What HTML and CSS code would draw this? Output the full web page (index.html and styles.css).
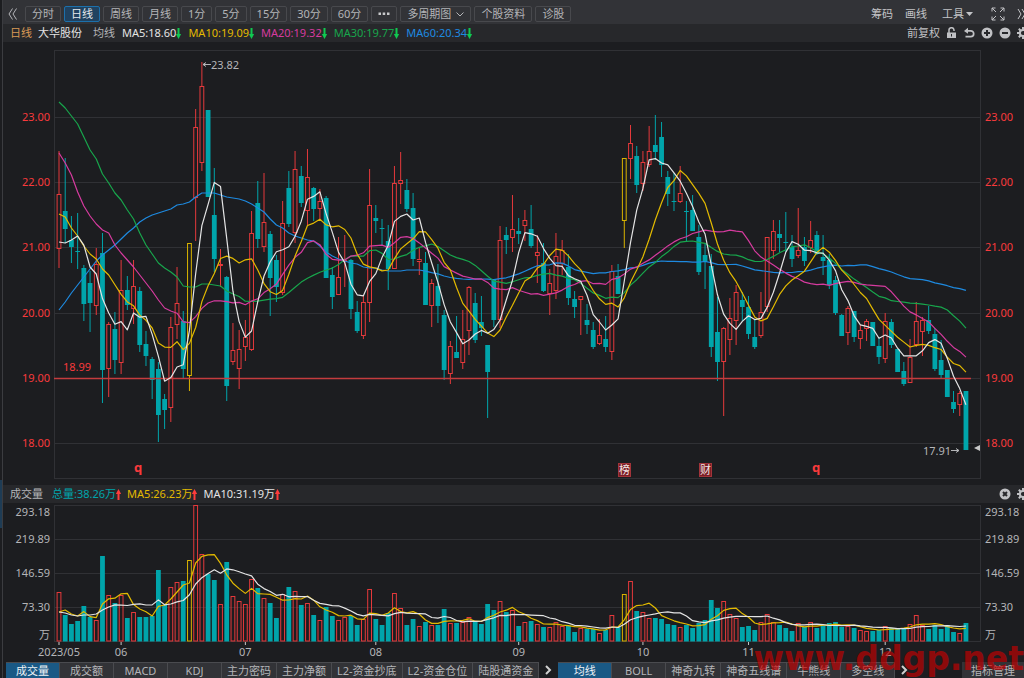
FILE: index.html
```html
<!DOCTYPE html>
<html lang="zh-CN">
<head>
<meta charset="utf-8">
<meta name="viewport" content="width=device-width, initial-scale=1">
<title>大华股份 日线</title>
<link rel="stylesheet" href="styles.css">
</head>
<body>
<div class="app">
  <aside class="edge"><div class="edge-thumb"></div></aside>
  <main class="panel">
    <nav class="toolbar" aria-label="周期">
      <button class="chev" aria-label="收起">
        <svg width="10" height="12" viewBox="0 0 10 12"><path d="M4.500.5 1 6l3.500 5.500M8.500.5 5 6l3.500 5.500"/></svg>
      </button>
      <div class="periods">
        <button class="period">分时</button>
        <button class="period active">日线</button>
        <button class="period">周线</button>
        <button class="period">月线</button>
        <button class="period">1分</button>
        <button class="period">5分</button>
        <button class="period">15分</button>
        <button class="period">30分</button>
        <button class="period">60分</button>
        <button class="period" aria-label="更多"><svg class="dots" width="12" height="4" viewBox="0 0 12 4"><path d="M.5.500h2.500v2.500H.5zM4.700.500h2.500v2.500H4.700zM9 .500h2.500v2.500H9z"/></svg></button>
        <label class="multi">
          <select class="period multi-select" aria-label="多周期图"><option>多周期图</option></select>
          <svg class="caret" width="8" height="5" viewBox="0 0 8 5"><path d="M.5.5 4 4 7.500.5"/></svg>
        </label>
        <button class="period">个股资料</button>
        <button class="period">诊股</button>
      </div>
      <div class="tools">
        <button class="tool">筹码</button>
        <button class="tool">画线</button>
        <button class="tool menu">工具<svg width="7" height="4" viewBox="0 0 7 4"><path class="solid" d="M0 0h7L3.500 4z"/></svg></button>
        <button class="tool" aria-label="全屏"><svg class="expand" width="14" height="14" viewBox="0 0 14 14"><path d="M1 4.500V1h3.500M1 1l4 4M9.500 1H13v3.500M13 1 9 5M1 9.500V13h3.500M1 13l4-4M13 9.500V13H9.500M13 13 9 9"/></svg></button>
        <button class="tool clip" aria-label="展开"><svg width="10" height="12" viewBox="0 0 10 12"><path d="M1 1l3 5-3 5M5 1l3 5-3 5"/></svg></button>
      </div>
    </nav>

    <header class="info">
      <span class="orange">日线</span><strong class="name">大华股份</strong><span class="lbl">均线</span>
      <span class="ma c5">MA5:18.60<svg class="dn" width="5" height="11" viewBox="0 0 5 11"><use href="#down"/></svg></span>
      <span class="ma c10">MA10:19.09<svg class="dn" width="5" height="11" viewBox="0 0 5 11"><use href="#down"/></svg></span>
      <span class="ma c20">MA20:19.32<svg class="dn" width="5" height="11" viewBox="0 0 5 11"><use href="#down"/></svg></span>
      <span class="ma c30">MA30:19.77<svg class="dn" width="5" height="11" viewBox="0 0 5 11"><use href="#down"/></svg></span>
      <span class="ma c60">MA60:20.34<svg class="dn" width="5" height="11" viewBox="0 0 5 11"><use href="#down"/></svg></span>
      <div class="info-tools">
        <button class="adjust">前复权</button>
        <button class="ico" aria-label="锁定"><svg width="11" height="12" viewBox="0 0 11 12"><path d="M3 6V3.500a2.500 2.500 0 0 1 5-.5v1" stroke-width="1.500"/><path class="solid" fill-rule="evenodd" d="M1 5.500h9V11H1zM5 7v2.500h1V7z"/></svg></button>
        <button class="ico" aria-label="撤销"><svg width="12" height="12" viewBox="0 0 12 12"><path class="solid" d="M1 4 5 .8v6z"/><path d="M4 3.800h3.800a2.900 2.900 0 0 1 0 5.800H2.500" stroke-width="1.700"/></svg></button>
        <button class="ico" aria-label="放大"><svg width="12" height="12" viewBox="0 0 12 12"><circle class="solid" cx="6" cy="6" r="5.500"/><path class="cut" d="M6 3v6M3 6h6"/></svg></button>
        <button class="ico" aria-label="缩小"><svg width="12" height="12" viewBox="0 0 12 12"><circle class="solid" cx="6" cy="6" r="5.500"/><path class="cut" d="M3 6h6"/></svg></button>
        <button class="ico clip" aria-label="设置"><svg width="12" height="12" viewBox="0 0 12 12"><use href="#gear"/></svg></button>
      </div>
    </header>

    <svg id="price" class="chart" viewBox="3 42 1021 443" role="img" aria-label="K线图">
      <defs>
        <path id="down" class="arrow" d="M1.500 0h2v6H5.200L2.500 11-.2 6h1.700z"/>
        <path id="up" class="arrow" d="M1.500 11h2V5H5.200L2.500 0-.2 5h1.700z"/>
        <g id="gear"><circle cx="6" cy="6" r="3.100" stroke-width="2"/><path stroke-width="2" d="M6 0v2.500M6 9.500V12M0 6h2.500M9.500 6H12M1.800 1.800l1.700 1.700M8.500 8.500l1.700 1.700M10.200 1.800 8.500 3.500M3.500 8.500l-1.700 1.700"/></g>
      </defs>
    </svg>

    <header class="info vol-info">
      <span class="lbl">成交量</span>
      <span class="ma teal">总量:38.26万<svg class="up" width="5" height="11" viewBox="0 0 5 11"><use href="#up"/></svg></span>
      <span class="ma c10">MA5:26.23万<svg class="up" width="5" height="11" viewBox="0 0 5 11"><use href="#up"/></svg></span>
      <span class="ma c5">MA10:31.19万<svg class="up" width="5" height="11" viewBox="0 0 5 11"><use href="#up"/></svg></span>
      <div class="info-tools">
        <button class="ico" aria-label="关闭"><svg width="12" height="12" viewBox="0 0 12 12"><circle class="solid" cx="6" cy="6" r="5.500"/><path class="cut" d="M4 4l4 4M8 4 4 8"/></svg></button>
        <button class="ico clip" aria-label="设置"><svg width="12" height="12" viewBox="0 0 12 12"><use href="#gear"/></svg></button>
      </div>
    </header>

    <svg id="volume" class="chart" viewBox="3 503 1021 159" role="img" aria-label="成交量图"></svg>

    <footer class="tabs">
      <div class="group">
        <button class="tab on">成交量</button><button class="tab">成交额</button><button class="tab">MACD</button><button class="tab">KDJ</button><button class="tab">主力密码</button><button class="tab">主力净额</button><button class="tab">L2-资金抄底</button><button class="tab">L2-资金仓位</button><button class="tab">陆股通资金</button>
      </div>
      <button class="next" aria-label="更多指标"><svg width="7" height="10" viewBox="0 0 7 10"><path d="M1 1l4 4-4 4"/></svg></button>
      <div class="group">
        <button class="tab on">均线</button><button class="tab">BOLL</button><button class="tab">神奇九转</button><button class="tab">神奇五线谱</button><button class="tab">牛熊线</button><button class="tab">多空线</button>
      </div>
      <button class="next" aria-label="更多均线"><svg width="7" height="10" viewBox="0 0 7 10"><path d="M1 1l4 4-4 4"/></svg></button>
      <button class="tab manage">指标管理</button>
    </footer>
  </main>
  <div class="watermark">www.ddgp.net</div>
</div>
<script src="chart.js"></script>
</body>
</html>
```
FILE: styles.css
```css
* { box-sizing: border-box; }
body {
  margin: 0;
  background: #1c1d20;
  color: #b4b5b8;
  font-family: "Noto Sans", "Noto Sans CJK SC", sans-serif;
  font-size: 11px;
  line-height: 16px;
  overflow: hidden;
}
button, select {
  margin: 0;
  padding: 0;
  border: 0;
  background: none;
  color: inherit;
  font: inherit;
  white-space: nowrap;
}
svg { flex: none; fill: none; stroke: currentColor; }
.solid { fill: currentColor; stroke: none; }
.app { display: flex; position: relative; min-height: 100vh; overflow: hidden; }
.edge { flex: none; width: 3px; border-right: 1px solid #3b3c40; background: #1c1d20; padding-top: 480px; }
.edge-thumb { height: 48px; background: #1e3c55; }
.panel { flex: 1; min-width: 0; display: flex; flex-direction: column; }

.toolbar { display: flex; align-items: center; height: 24px; padding: 4px 0 0 5px; background: #323337; }
.chev { width: 17px; height: 16px; display: flex; align-items: center; }
.periods { display: flex; gap: 3px; }
.period {
  display: flex;
  align-items: center;
  height: 16px;
  padding: 0 6px;
  border: 1px solid #48494d;
  border-radius: 2px;
  line-height: 14px;
}
.period.active { border-color: #1c70ab; background: #204260; color: #e6e9ec; }
.dots { fill: #c8c9cb; stroke: none; }
.multi { position: relative; display: flex; }
.multi-select { appearance: none; width: 71px; }
.caret { position: absolute; right: 7px; top: 6px; }
.tools { margin-left: auto; display: flex; align-items: center; }
.tool { display: flex; align-items: center; margin-right: 12px; color: #c2c3c6; }
.tool.menu { gap: 2px; margin: 0 18px 0 3px; }
.expand { stroke-width: 1; }
.clip { width: 7px; overflow: hidden; margin-right: 0; }

.info { display: flex; align-items: center; height: 18px; padding-left: 7px; background: #27282b; }
.orange { color: #d99a56; margin-right: 6px; }
.name { color: #e3e3e3; font-weight: 400; margin-right: 11px; }
.lbl { margin-right: 7px; }
.ma { display: flex; align-items: center; margin-right: 7px; }
.c5 { color: #e4e4e4; }
.c10 { color: #e3ba00; }
.c20 { color: #d63b9f; }
.c30 { color: #18a64c; }
.c60 { color: #1e8ae0; }
.teal { color: #00a5ab; }
.arrow { fill: currentColor; stroke: none; }
.dn { color: #10c850; }
.up { color: #ff3b3b; }
.vol-info .lbl { margin-right: 9px; }
.vol-info .ma { margin-right: 6px; }
.info-tools { margin-left: auto; display: flex; align-items: center; gap: 6px; color: #c0c1c4; }
.ico { display: flex; }
.cut { stroke: #27282b; stroke-width: 2; }

.chart { display: block; width: 100%; height: auto; font-size: 11px; }
.chart text { stroke: none; fill: #b4b5b8; }
.chart .price-label { fill: #f83a3c; }
.grid, .frame { stroke: #303135; }
.tick { stroke: #c8c8c8; }
.level { stroke: #c43c3e; stroke-width: 1.5; }
.wick, .line { stroke-width: 1; }
.line { stroke-linejoin: round; stroke-width: 1.2; }
.rise { stroke: #e5393b; }
.fall { stroke: #00a5ab; }
.fall.body { fill: #00a5ab; stroke: none; }
.gold { stroke: #d9b300; }
.chart .event { fill: #f83a3c; font-size: 13px; font-weight: 700; text-anchor: middle; }
.badge { fill: #7c1d24; stroke: #a2343a; }
.chart .badge-text { fill: #f2e6e6; text-anchor: middle; }
.end { text-anchor: end; }
.middle { text-anchor: middle; }
.marker { fill: #c8c8c8; stroke: none; }

.tabs { display: flex; align-items: stretch; height: 16px; padding-left: 3px; }
.group { display: flex; border-top: 1px solid #4a4b4f; }
.tab { min-width: 54px; padding: 0 5px; border-right: 1px solid #4a4b4f; background: #323337; line-height: 15px; }
.tab.on { background: #1a5985; color: #eef2f5; }
.next { width: 19px; display: flex; align-items: center; justify-content: center; color: #d0d0d0; }
.next svg { stroke-width: 2; }
.manage { margin-left: auto; width: 62px; border-right: 0; }

.watermark {
  position: absolute;
  right: 0;
  bottom: 0;
  color: #c80000;
  opacity: 0.65;
  font: 700 33px/38px "DejaVu Sans", sans-serif;
  pointer-events: none;
}
```
FILE: chart.js
```javascript
// Daily bars: kind (r rise, t fall, y limit), high, body top, body bottom, low, volume top.
const bars = `
r151,194,249,268,592 t158,211,229,243,615 t216,240,247,263,624 t213,251,252,269,621 t265,268,304,321,606
t271,283,303,332,617 r248,264,306,315,620 t233,253,370,403,556 r322,324,369,397,595 t312,329,360,374,603
r260,290,363,374,595 t276,290,305,310,618 r260,286,309,324,612 t287,291,345,352,617 t331,344,356,366,617
t357,359,380,399,616 t362,369,415,442,570 t394,399,410,429,605 r317,327,408,422,587 r267,303,325,339,582
t311,321,369,378,581 y243,243,376,391,560 r109,127,198,241,505 r62,86,163,171,554 t110,110,197,197,574
t168,215,259,272,580 r249,264,265,287,604 t276,277,386,401,562 r323,350,362,365,596 r330,349,369,389,601
r320,337,347,361,604 r211,233,350,351,579 t181,203,239,248,588 r173,222,247,252,598 t231,234,278,316,603
t255,260,287,302,618 r201,223,293,295,594 t171,188,224,227,587 r151,169,233,243,591 t166,176,203,207,605
r149,177,211,226,603 t187,188,209,221,615 r189,201,209,221,620 t196,198,278,278,607 t267,275,297,309,616
r237,277,295,295,620 r235,260,262,287,617 t259,260,309,319,616 t301,312,331,333,625 r295,302,336,339,619
r169,205,303,322,589 t205,218,221,233,619 t219,228,229,246,625 t225,241,269,290,613 r166,183,269,269,593
r152,180,184,204,608 t179,190,209,212,625 t193,208,259,266,619 r248,259,262,275,626 t252,263,305,305,622
r279,283,306,327,625 t264,286,306,323,625 t310,315,370,380,609 r341,346,374,384,623 t316,352,358,358,623
r310,339,363,369,622 r286,287,331,355,617 t293,303,340,343,621 t296,322,328,336,624 t345,345,372,418,604
t279,279,320,327,610 r226,240,320,328,601 t227,235,240,254,612 r195,229,238,252,610 t218,231,234,244,626
r210,220,226,241,622 t205,229,246,248,621 r235,252,256,283,624 t243,263,291,292,627 r269,283,294,315,627
r233,256,291,299,622 r240,250,264,275,626 t254,267,298,305,626 t291,299,307,318,632 r296,296,300,335,628
t304,320,325,334,629 t322,330,347,349,629 r319,335,344,345,633 t316,339,347,352,630 r265,271,352,360,615
t264,276,294,294,627 y158,158,221,248,594 r125,143,159,179,581 t146,156,185,193,611 r151,162,184,191,612
r126,151,165,167,618 t115,145,152,160,618 t122,137,165,177,619 t171,177,194,206,624 t173,201,202,211,625
r166,193,202,203,627 t201,211,212,241,625 t195,210,231,231,628 t225,237,272,275,623 t243,255,262,289,620
t254,266,347,357,600 t297,332,362,381,608 r327,328,362,416,601 r298,318,340,355,614 r285,292,321,345,618
t292,300,307,321,627 t296,307,334,339,626 t320,337,347,349,630 r292,312,336,338,622 r237,237,307,312,614
r220,231,251,259,622 t220,234,238,252,625 t212,242,243,252,628 t235,247,259,267,631 r208,250,256,258,623
t237,247,261,266,627 r221,240,248,253,622 t231,235,254,255,628 t235,257,261,275,626 t254,260,285,289,623
t276,280,313,315,622 t314,315,336,336,627 r306,308,333,345,626 t311,311,337,342,628 r325,330,339,349,630
r319,321,329,341,631 t322,322,346,346,631 t337,346,357,364,630 r313,321,359,363,626 t319,322,345,348,628
t349,349,372,372,629 t362,371,384,386,628 r339,357,383,383,624 r302,321,345,347,615 r317,320,332,356,625
t306,320,331,334,629 t328,334,369,371,625 t340,360,375,379,629 t370,370,397,397,625 t391,402,409,413,632
r391,393,405,416,633 t391,391,450,450,623`.trim().split(/\s+/).map(s => {
  const [high, top, bottom, low, volume] = s.slice(1).split(',').map(Number);
  return { kind: s[0], high, top, bottom, low, volume };
});

// Average values that reach back before the first visible day.
const seeds = {
  c5: [242, 243, 240, 236],
  c10: [214, 217, 228, 236, 246, 254, 259, 269, 275],
  c20: [153, 163, 175, 192, 206, 216, 224, 230, 233, 245, 253, 260, 267, 275, 283, 291, 300, 308, 311],
  c30: [102, 108, 116, 124, 137, 150, 159, 174, 183, 193, 200, 210, 219, 233, 245, 254, 263, 268, 272, 277,
    286, 287, 287, 284, 284, 285, 286, 291, 294],
  c60: [310, 302, 293, 285, 277, 269, 261, 255, 250, 245, 239, 233, 228, 222, 218, 215, 213, 211, 209, 205,
    204, 202, 197, 193, 193, 193, 195, 197, 198, 199, 201, 204, 208, 212, 219, 225, 228, 233, 236, 238,
    240, 241, 246, 252, 256, 259, 261, 263, 264, 267, 268, 268, 270, 271, 271, 271, 270, 270, 270]
};
const volumeSeeds = { c10: [612, 610, 614, 616], c5: [612, 613, 615, 616, 615, 615, 614, 610, 607] };

const classes = { r: 'rise', t: 'fall', y: 'gold' };
const xAt = i => +(59 + 6.212 * i).toFixed(2);
const price = document.getElementById('price');
const volume = document.getElementById('volume');

function add(parent, tag, attrs, text) {
  const el = document.createElementNS('http://www.w3.org/2000/svg', tag);
  for (const key in attrs) el.setAttribute(key, attrs[key]);
  if (text) el.textContent = text;
  parent.appendChild(el);
}
const line = (p, x1, y1, x2, y2, c) => add(p, 'line', { x1, y1, x2, y2, class: c });
const label = (p, x, y, c, text) => add(p, 'text', { x, y, class: c }, text);

function body(parent, x, top, bottom, kind) {
  if (kind === 't') {
    add(parent, 'rect', { x: x - 2.4, y: top, width: 4.8, height: Math.max(1, bottom - top), class: 'fall body' });
  } else {
    add(parent, 'rect', { x: x - 1.9, y: top + 0.5, width: 3.8, height: Math.max(1, bottom - top - 1), class: classes[kind] });
  }
}
function average(parent, values, seed, c) {
  const n = seed.length + 1;
  const points = values.map((v, i) => {
    const y = i < seed.length ? seed[i] : values.slice(i - n + 1, i + 1).reduce((a, b) => a + b) / n;
    return xAt(i) + ',' + y.toFixed(1);
  });
  add(parent, 'polyline', { points: points.join(' '), class: 'line ' + c, stroke: 'currentColor' });
}

add(price, 'rect', { x: 54.5, y: 50.5, width: 926, height: 428, class: 'frame' });
[117.5, 182.5, 247.5, 313.5, 378.5, 443.5].forEach((y, i) => {
  line(price, 55, y, 980, y, 'grid');
  label(price, 50, y + 3.5, 'price-label end', (23 - i) + '.00');
  label(price, 985, y + 3.5, 'price-label', (23 - i) + '.00');
});
bars.forEach((b, i) => {
  const x = xAt(i);
  const c = 'wick ' + classes[b.kind];
  if (b.high < b.top) line(price, x, b.high, x, b.top, c);
  if (b.low > b.bottom) line(price, x, b.bottom, x, b.low, c);
  body(price, x, b.top, b.bottom, b.kind);
});
line(price, 54, 378.5, 971, 378.5, 'level');
label(price, 63, 371, 'price-label', '18.99');
const closes = bars.map(b => b.kind === 't' ? b.bottom : b.top);
['c60', 'c30', 'c20', 'c10', 'c5'].forEach(c => average(price, closes, seeds[c], c));

add(price, 'path', { d: 'M211 64.5h-8m3-2-3 2 3 2' });
label(price, 211, 69, '', '23.82');
label(price, 951, 455, 'end', '17.91');
add(price, 'path', { d: 'M951 450.5h8m-3-2 3 2-3 2' });
add(price, 'path', { d: 'M980 445v6l-6-3z', class: 'marker' });
label(price, 138, 472, 'event', 'q');
label(price, 816, 472, 'event', 'q');
[[624.5, '榜'], [705.5, '财']].forEach(([x, text]) => {
  add(price, 'rect', { x: x - 6, y: 463.5, width: 12, height: 13, class: 'badge' });
  label(price, x, 474, 'badge-text', text);
});

add(volume, 'rect', { x: 54.5, y: 505.5, width: 926, height: 136, class: 'frame' });
[539.5, 573.5, 607.5].forEach(y => line(volume, 55, y, 980, y, 'grid'));
[['293.18', 516], ['219.89', 543], ['146.59', 577], ['73.30', 611], ['万', 639]].forEach(([text, y]) => {
  label(volume, 50, y, 'end', text);
  label(volume, 985, y, '', text);
});
bars.forEach((b, i) => body(volume, xAt(i), b.volume, 641.5, b.kind));
const volumes = bars.map(b => b.volume);
average(volume, volumes, volumeSeeds.c10, 'c10');
average(volume, volumes, volumeSeeds.c5, 'c5');
[[0, '2023/05'], [10, '06'], [30, '07'], [51, '08'], [74, '09'], [94, '10'], [111, '11'], [133, '12']].forEach(([i, text]) => {
  line(volume, xAt(i), 642, xAt(i), 645, 'tick');
  label(volume, xAt(i), 656, 'middle', text);
});
```
